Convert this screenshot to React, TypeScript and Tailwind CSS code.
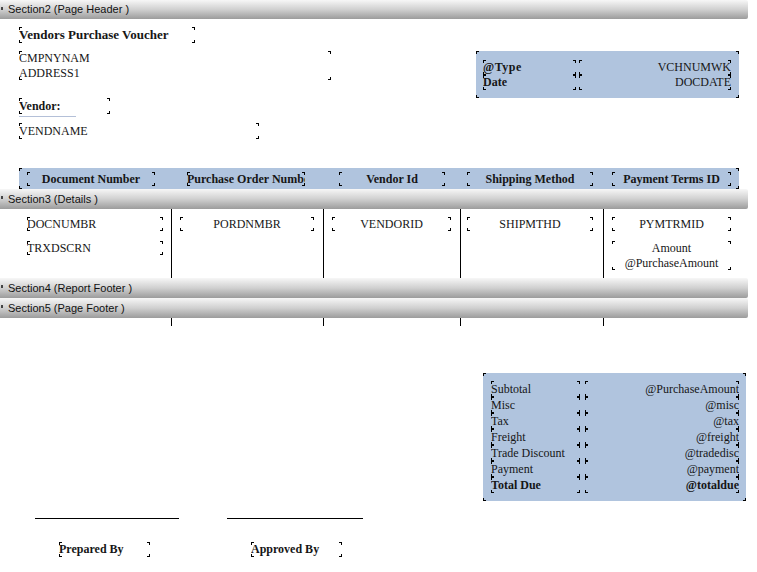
import type { ReactNode } from "react";
import clsx from "clsx";

function Marks() {
  return (
    <>
      <span className="absolute left-0 top-0 h-[3px] w-[3px] border-l border-t border-black" />
      <span className="absolute right-0 top-0 h-[3px] w-[3px] border-r border-t border-black" />
      <span className="absolute left-0 bottom-0 h-[3px] w-[3px] border-l border-b border-black" />
      <span className="absolute right-0 bottom-0 h-[3px] w-[3px] border-r border-b border-black" />
    </>
  );
}

interface FieldProps {
  className?: string;
  children?: ReactNode;
}

function Field({ className, children }: FieldProps) {
  return (
    <div className={clsx("relative shrink-0 overflow-hidden whitespace-nowrap", className)}>
      {children}
      <Marks />
    </div>
  );
}

function SectionBar({ label, tall }: { label: string; tall?: boolean }) {
  return (
    <div
      className={clsx(
        "relative w-[748px] shrink-0 rounded-r-[2px] bg-linear-to-b from-[#f7f7f7] via-[#d0d0d0] to-[#9c9c9c] pl-[8px] font-['Liberation_Sans'] text-[11px] text-[#111]",
        tall ? "h-[20px] leading-[20px]" : "h-[19px] leading-[19px]",
      )}
    >
      <span className="absolute left-[1px] top-[7px] h-[3px] w-[2px] bg-[#444]" />
      {label}
    </div>
  );
}

const COLS = [
  "w-[171px]",
  "w-[152px] border-l border-black",
  "w-[137px] border-l border-black",
  "w-[143px] border-l border-black",
  "flex-1 border-l border-black",
];

const TOTALS: { label: string; value: string; bold?: boolean }[] = [
  { label: "Subtotal", value: "@PurchaseAmount" },
  { label: "Misc", value: "@misc" },
  { label: "Tax", value: "@tax" },
  { label: "Freight", value: "@freight" },
  { label: "Trade Discount", value: "@tradedisc" },
  { label: "Payment", value: "@payment" },
  { label: "Total Due", value: "@totaldue", bold: true },
];

export default function App() {
  return (
    <div className="flex h-[572px] w-[757px] flex-col overflow-hidden bg-white font-['Liberation_Serif'] text-[12px] text-[#161616]">
      <SectionBar label="Section2 (Page Header  )" />

      {/* page header */}
      <div className="flex h-[149px] shrink-0">
        <div className="flex w-[476px] flex-col items-start pl-[19px] pt-[8px]">
          <Field className="h-[16px] w-[176px] text-[13px] font-bold leading-[16px]">
            Vendors Purchase Voucher
          </Field>
          <Field className="mt-[8px] h-[29px] w-[312px] leading-[15px]">
            <div>CMPNYNAM</div>
            <div>ADDRESS1</div>
          </Field>
          <Field className="mt-[18px] h-[16px] w-[91px] font-bold leading-[16px]">
            Vendor:
          </Field>
          <div className="mt-[2px] h-px w-[57px] bg-[#b4c0d8]" />
          <Field className="mt-[6px] h-[16px] w-[240px] leading-[16px]">
            VENDNAME
          </Field>
        </div>
        <div className="relative mt-[32px] flex h-[47px] w-[263px] flex-col bg-[#b0c4de] pl-[7px] pr-[8px] pt-[9px]">
          <Marks />
          <div className="flex gap-[3px]">
            <Field className="h-[15px] w-[93px] font-bold leading-[15px] tracking-[0.5px]">@Type</Field>
            <Field className="h-[15px] flex-1 text-right leading-[15px]">VCHNUMWK</Field>
          </div>
          <div className="flex gap-[3px]">
            <Field className="h-[15px] w-[93px] font-bold leading-[15px]">Date</Field>
            <Field className="h-[15px] flex-1 text-right leading-[15px]">DOCDATE</Field>
          </div>
        </div>
      </div>

      {/* column headings */}
      <div className="relative ml-[19px] flex h-[21px] w-[720px] shrink-0 items-center bg-[#b0c4de] font-bold">
        <Marks />
        <Field className="ml-[8px] h-[14px] w-[128px] text-center leading-[14px]">Document Number</Field>
        <Field className="ml-[32px] h-[14px] w-[118px] text-center leading-[14px]">Purchase Order Number</Field>
        <Field className="ml-[34px] h-[14px] w-[106px] text-center leading-[14px]">Vendor Id</Field>
        <Field className="ml-[22px] h-[14px] w-[126px] text-center leading-[14px]">Shipping Method</Field>
        <Field className="ml-[19px] h-[14px] w-[119px] text-center leading-[14px]">Payment Terms ID</Field>
      </div>

      <SectionBar label="Section3 (Details  )" tall />

      {/* details */}
      <div className="flex h-[69px] shrink-0">
        <div className={clsx(COLS[0], "flex flex-col pl-[27px] pt-[8px]")}>
          <Field className="h-[14px] w-[136px] leading-[14px]">DOCNUMBR</Field>
          <Field className="mt-[10px] h-[14px] w-[136px] leading-[14px]">TRXDSCRN</Field>
        </div>
        <div className={clsx(COLS[1], "pl-[8px] pt-[8px]")}>
          <Field className="h-[14px] w-[134px] text-center leading-[14px]">PORDNMBR</Field>
        </div>
        <div className={clsx(COLS[2], "pl-[8px] pt-[8px]")}>
          <Field className="h-[14px] w-[119px] text-center leading-[14px]">VENDORID</Field>
        </div>
        <div className={clsx(COLS[3], "pl-[6px] pt-[8px]")}>
          <Field className="h-[14px] w-[126px] text-center leading-[14px]">SHIPMTHD</Field>
        </div>
        <div className={clsx(COLS[4], "flex flex-col pl-[8px] pt-[8px]")}>
          <Field className="h-[14px] w-[119px] text-center leading-[14px]">PYMTRMID</Field>
          <Field className="mt-[10px] h-[29px] w-[119px] text-center leading-[15px]">
            <div>Amount</div>
            <div>@PurchaseAmount</div>
          </Field>
        </div>
      </div>

      <SectionBar label="Section4 (Report Footer  )" tall />
      <SectionBar label="Section5 (Page Footer  )" tall />

      {/* page footer */}
      <div className="flex h-[8px] shrink-0">
        {COLS.map((c, i) => (
          <div key={i} className={c} />
        ))}
      </div>

      <div className="relative ml-[483px] mt-[47px] flex h-[128px] w-[263px] shrink-0 flex-col bg-[#b0c4de] pl-[8px] pr-[7px] pt-[8px]">
        <Marks />
        {TOTALS.map((t) => (
          <div key={t.label} className={clsx("flex gap-[5px]", t.bold && "font-bold")}>
            <Field className="h-[16px] w-[89px] leading-[16px]">{t.label}</Field>
            <Field className="h-[16px] flex-1 text-right leading-[16px]">{t.value}</Field>
          </div>
        ))}
      </div>

      <div className="mt-[17px] flex shrink-0">
        <div className="ml-[35px] h-px w-[144px] bg-black" />
        <div className="ml-[48px] h-px w-[136px] bg-black" />
      </div>

      <div className="mt-[23px] flex shrink-0 font-bold">
        <Field className="ml-[59px] h-[15px] w-[91px] leading-[15px]">Prepared By</Field>
        <Field className="ml-[101px] h-[15px] w-[91px] leading-[15px]">Approved By</Field>
      </div>
    </div>
  );
}
